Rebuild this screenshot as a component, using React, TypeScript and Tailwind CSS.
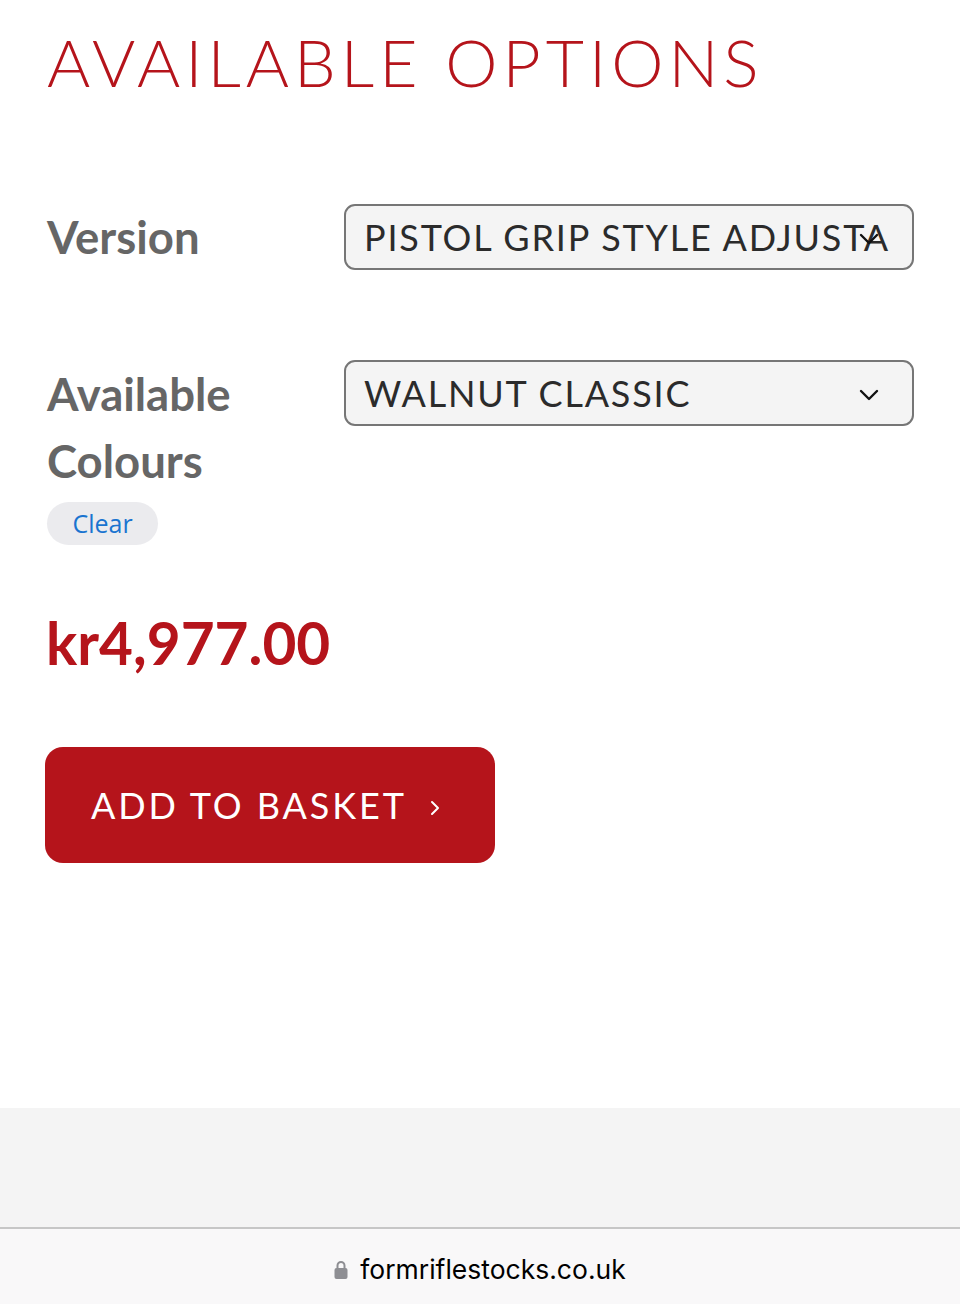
import React from "react";

const Chevron = ({ className = "" }: { className?: string }) => (
  <svg className={className} width="20" height="12" viewBox="0 0 20 12" fill="none">
    <path d="M2 2 L10 10 L18 2" stroke="#111" strokeWidth="2.4" strokeLinecap="round" strokeLinejoin="round" />
  </svg>
);

function Select({ value }: { value: string }) {
  return (
    <div className="relative h-[66px] w-[570px] shrink-0 rounded-[11px] border-2 border-[#767676] bg-[#f4f4f4]">
      <div className="mr-[22px] flex h-full items-center overflow-hidden whitespace-nowrap pl-[18px] text-[36px] tracking-[1.8px] text-[#2b2b2b] [font-family:Lato,'Noto_Sans',sans-serif]">
        {value}
      </div>
      <Chevron className="absolute right-[33px] top-[27px]" />
    </div>
  );
}

export default function App() {
  return (
    <div className="flex min-h-[1304px] w-[960px] flex-col bg-white [font-family:Lato,sans-serif]">
      <div className="flex-1 pl-[47px] pr-[40px] pt-[29px]">
        <h2 className="whitespace-nowrap text-[66px] font-light leading-[66px] tracking-[5px] text-[#b5141b] [font-family:Lato,sans-serif]">
          AVAILABLE OPTIONS
        </h2>

        <div className="mt-[109px] flex">
          <div className="w-[297px] shrink-0 text-[45.5px] font-bold leading-[66px] text-[#666]">Version</div>
          <Select value="PISTOL GRIP STYLE ADJUSTABLE" />
        </div>

        <div className="mt-[90px] flex">
          <div className="w-[297px] shrink-0">
            <div className="text-[45.5px] font-bold leading-[67px] text-[#666]">
              Available
              <br />
              Colours
            </div>
            <div className="mt-[8px] inline-flex h-[43px] w-[111px] items-center justify-center rounded-full bg-[#ebebee] text-[25px] text-[#1a74d0] [font-family:'Open_Sans',sans-serif]">
              Clear
            </div>
          </div>
          <Select value="WALNUT CLASSIC" />
        </div>

        <div className="ml-[-1px] mt-[67px] text-[58.5px] font-bold leading-[60px] text-[#b5141b]">kr4,977.00</div>

        <button className="ml-[-2px] mt-[75px] flex h-[116px] w-[450px] items-center rounded-[18px] bg-[#b5141b] pl-[46px] text-[36px] tracking-[2.9px] text-white">
          <span>ADD TO BASKET</span>
          <svg className="ml-[22px] mt-[6px]" width="12" height="16" viewBox="0 0 12 16" fill="none">
            <path d="M3 2 L9 8 L3 14" stroke="#fff" strokeWidth="2" strokeLinecap="round" strokeLinejoin="round" />
          </svg>
        </button>
      </div>

      <div className="h-[119px] bg-[#f4f4f4]" />
      <div className="h-[2px] bg-[#c6c6c6]" />
      <div className="flex h-[75px] items-center justify-center gap-[12px] bg-[#f9f8f9] pt-[6px]">
        <svg width="14" height="19" viewBox="0 0 14 19">
          <path d="M3.5 8 V5.5 a3.5 3.5 0 0 1 7 0 V8" stroke="#8e8e93" strokeWidth="2" fill="none" />
          <rect x="0.5" y="8" width="13" height="11" rx="2" fill="#8e8e93" />
        </svg>
        <span className="text-[26.5px] text-black [font-family:Inter,sans-serif]">formriflestocks.co.uk</span>
      </div>
    </div>
  );
}
